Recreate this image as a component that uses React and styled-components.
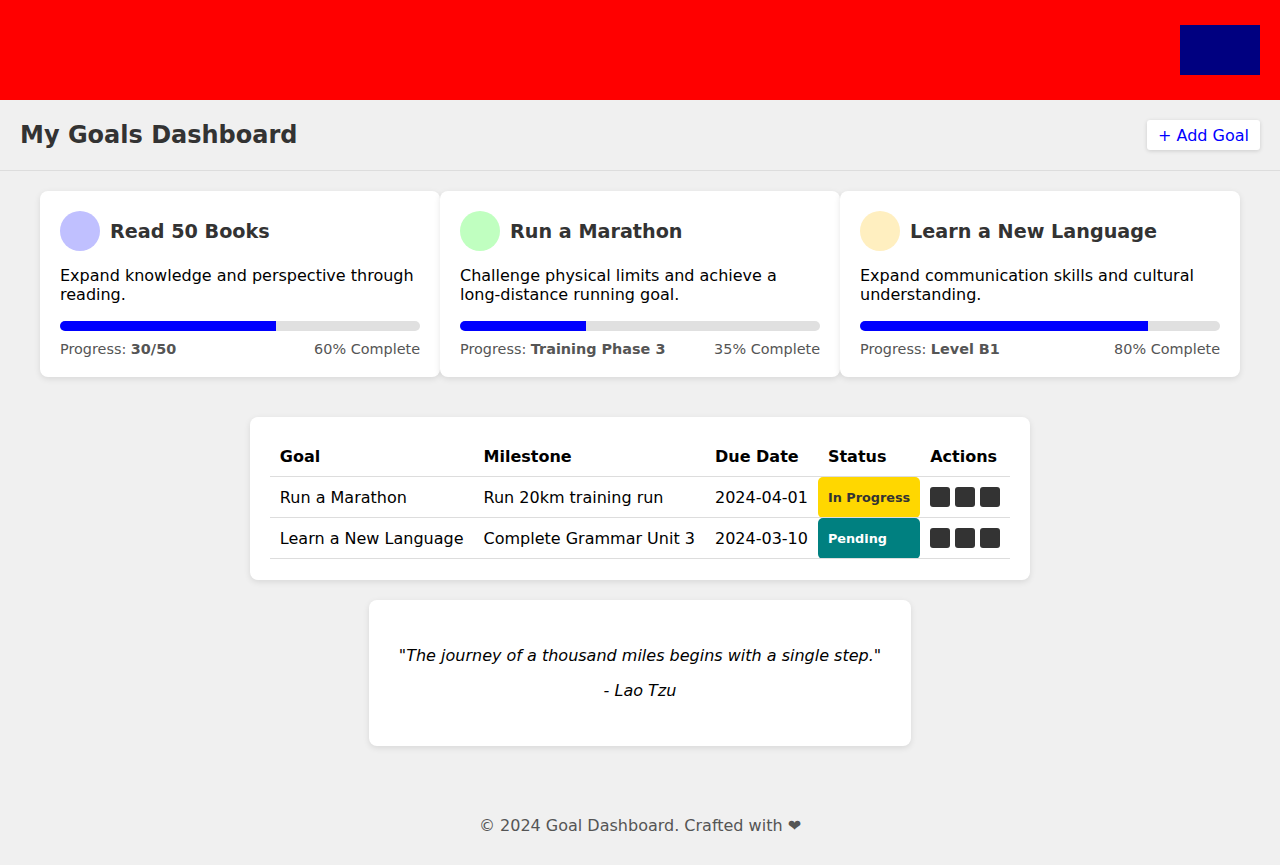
import styled, { createGlobalStyle } from "styled-components";

const GlobalStyle = createGlobalStyle`
  body {
    margin: 0;
    background: #f0f0f0;
    font-family: "DejaVu Sans", Verdana, sans-serif;
    color: #000;
  }
`;

const TopBar = styled.header`
  display: flex;
  justify-content: flex-end;
  align-items: center;
  height: 100px;
  padding: 0 20px;
  background: #ff0000;
`;

const Logo = styled.div`
  width: 80px;
  height: 50px;
  background: #000080;
`;

const TitleBar = styled.div`
  display: flex;
  justify-content: space-between;
  align-items: center;
  height: 70px;
  padding: 0 20px;
  border-bottom: 1px solid #ddd;
`;

const Title = styled.h1`
  margin: 0;
  font-size: 24px;
  font-weight: bold;
  color: #333;
`;

const AddButton = styled.button`
  font-family: inherit;
  font-size: 16px;
  color: #0000ff;
  background: #fff;
  border: none;
  border-radius: 3px;
  padding: 5px 11px;
  height: 30px;
  box-shadow: 0 1px 4px rgba(0, 0, 0, 0.15);
  cursor: pointer;
`;

const CardRow = styled.div`
  display: grid;
  grid-template-columns: repeat(3, 400px);
  justify-content: center;
  padding: 20px 40px 0;
`;

const Card = styled.div`
  background: #fff;
  border-radius: 8px;
  padding: 20px;
  box-shadow: 0 2px 6px rgba(0, 0, 0, 0.1);
`;

const CardHead = styled.div`
  display: flex;
  align-items: center;
  gap: 10px;
  margin-bottom: 15px;
`;

const Dot = styled.div`
  width: 40px;
  height: 40px;
  border-radius: 50%;
  background: ${(p) => p.$color};
`;

const CardTitle = styled.h2`
  margin: 0;
  font-size: 19.2px;
  color: #333;
`;

const Desc = styled.p`
  margin: 0 0 17px;
  font-size: 16px;
  line-height: 19px;
`;

const Track = styled.div`
  height: 10px;
  border-radius: 5px;
  background: #e0e0e0;
  overflow: hidden;
`;

const Fill = styled.div`
  height: 100%;
  background: #0000ff;
`;

const Meta = styled.div`
  display: flex;
  justify-content: space-between;
  margin-top: 10px;
  font-size: 14.4px;
  line-height: 16px;
  color: #555;
`;

const Panel = styled.div`
  width: fit-content;
  margin: ${(p) => p.$mt}px auto 0;
  background: #fff;
  border-radius: 8px;
  padding: ${(p) => p.$pad}px;
  box-shadow: 0 2px 6px rgba(0, 0, 0, 0.1);
`;

const Table = styled.table`
  border-collapse: collapse;
  font-size: 16px;
  margin-bottom: 1px;
`;

const Th = styled.th`
  text-align: left;
  padding: 10px;
  border-bottom: 1px solid #ddd;
  line-height: 19px;
`;

const Td = styled.td`
  padding: 10px;
  border-bottom: 1px solid #ddd;
  line-height: 19px;
  white-space: nowrap;
`;

const StatusCell = styled.td`
  padding: 10px;
  border-bottom: 1px solid #ddd;
  border-radius: 5px;
  font-size: 12.8px;
  font-weight: bold;
  background: ${(p) => p.$bg};
  color: ${(p) => p.$fg};
`;

const Actions = styled.div`
  display: flex;
  gap: 5px;
`;

const ActionBtn = styled.button`
  width: 20px;
  height: 20px;
  padding: 0;
  border: none;
  border-radius: 3px;
  background: #333;
`;

const Quote = styled.p`
  margin: 16px 0;
  font-size: 16px;
  font-style: italic;
  line-height: 19px;
  text-align: center;
`;

const Footer = styled.footer`
  margin-top: 60px;
  padding: 10px 20px 20px;
  text-align: center;
  font-size: 16px;
  line-height: 19px;
  color: #555;
`;

const goals = [
  {
    title: "Read 50 Books",
    color: "#c0c0ff",
    desc: "Expand knowledge and perspective through reading.",
    pct: 60,
    label: "30/50",
  },
  {
    title: "Run a Marathon",
    color: "#c0ffc0",
    desc: "Challenge physical limits and achieve a long-distance running goal.",
    pct: 35,
    label: "Training Phase 3",
  },
  {
    title: "Learn a New Language",
    color: "#ffefc0",
    desc: "Expand communication skills and cultural understanding.",
    pct: 80,
    label: "Level B1",
  },
];

const rows = [
  {
    goal: "Run a Marathon",
    milestone: "Run 20km training run",
    due: "2024-04-01",
    status: "In Progress",
    bg: "#ffd700",
    fg: "#333",
  },
  {
    goal: "Learn a New Language",
    milestone: "Complete Grammar Unit 3",
    due: "2024-03-10",
    status: "Pending",
    bg: "#008080",
    fg: "#fff",
  },
];

export default function App() {
  return (
    <>
      <GlobalStyle />
      <TopBar>
        <Logo />
      </TopBar>
      <TitleBar>
        <Title>My Goals Dashboard</Title>
        <AddButton>+ Add Goal</AddButton>
      </TitleBar>

      <CardRow>
        {goals.map((g) => (
          <Card key={g.title}>
            <CardHead>
              <Dot $color={g.color} />
              <CardTitle>{g.title}</CardTitle>
            </CardHead>
            <Desc>{g.desc}</Desc>
            <Track>
              <Fill style={{ width: `${g.pct}%` }} />
            </Track>
            <Meta>
              <span>
                Progress: <b>{g.label}</b>
              </span>
              <span>{g.pct}% Complete</span>
            </Meta>
          </Card>
        ))}
      </CardRow>

      <Panel $mt={40} $pad={20}>
        <Table>
          <thead>
            <tr>
              <Th>Goal</Th>
              <Th>Milestone</Th>
              <Th>Due Date</Th>
              <Th>Status</Th>
              <Th>Actions</Th>
            </tr>
          </thead>
          <tbody>
            {rows.map((r) => (
              <tr key={r.goal}>
                <Td>{r.goal}</Td>
                <Td>{r.milestone}</Td>
                <Td>{r.due}</Td>
                <StatusCell $bg={r.bg} $fg={r.fg}>
                  {r.status}
                </StatusCell>
                <Td>
                  <Actions>
                    <ActionBtn />
                    <ActionBtn />
                    <ActionBtn />
                  </Actions>
                </Td>
              </tr>
            ))}
          </tbody>
        </Table>
      </Panel>

      <Panel $mt={20} $pad={30}>
        <Quote>"The journey of a thousand miles begins with a single step."</Quote>
        <Quote>- Lao Tzu</Quote>
      </Panel>

      <Footer>© 2024 Goal Dashboard. Crafted with ❤</Footer>
    </>
  );
}
